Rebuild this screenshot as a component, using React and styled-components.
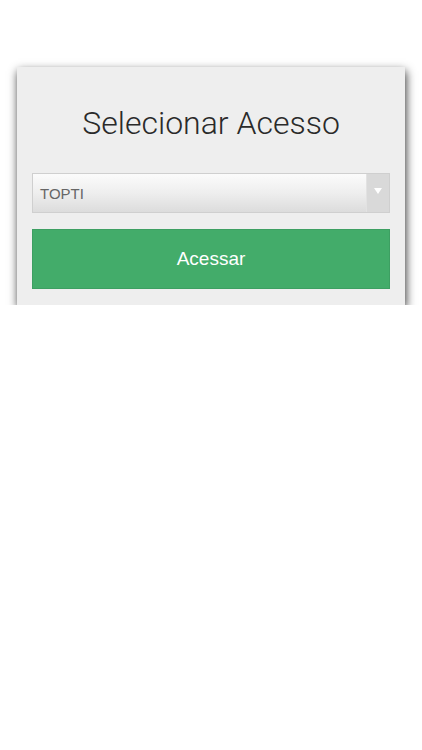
import React, { useState } from 'react';
import styled, { createGlobalStyle } from 'styled-components';

const GlobalStyle = createGlobalStyle`
  body {
    margin: 0;
    background: #ffffff;
    font-family: 'Liberation Sans', Arial, sans-serif;
  }
`;

const Page = styled.div`
  padding: 67px 17px 0 17px;
`;

const Card = styled.div`
  width: 388px;
  box-sizing: border-box;
  background: #eeeeee;
  padding: 36px 15px 16px 15px;
  box-shadow: 1px 4px 9px rgba(0, 0, 0, 0.8);
  display: flex;
  flex-direction: column;
`;

const Title = styled.h1`
  margin: 0 0 30px 0;
  font-family: Roboto, 'Liberation Sans', sans-serif;
  font-weight: 300;
  font-size: 32px;
  line-height: 40px;
  color: #2a2a2a;
  text-align: center;
`;

const SelectBox = styled.div`
  position: relative;
  display: flex;
  align-items: stretch;
  height: 40px;
  box-sizing: border-box;
  border: 1px solid #cfcfcf;
  background: linear-gradient(to bottom, #fbfbfb 0%, #eeeeee 50%, #dcdcdc 100%);
  margin-bottom: 16px;
`;

const SelectLabel = styled.div`
  flex: 1;
  display: flex;
  align-items: center;
  padding-left: 7px;
  font-size: 15px;
  color: #666666;
`;

const ArrowCell = styled.div`
  width: 22px;
  display: flex;
  align-items: center;
  justify-content: center;
  background: #d9d9d9;
  border-left: 1px solid #e2e2e2;
`;

const Arrow = styled.div`
  width: 0;
  height: 0;
  border-left: 4px solid transparent;
  border-right: 4px solid transparent;
  border-top: 6px solid #ffffff;
  margin-bottom: 4px;
`;

const Button = styled.button`
  height: 60px;
  border: 1px solid #3d9f62;
  background: #43ac6a;
  color: #ffffff;
  font-family: 'Liberation Sans', Arial, sans-serif;
  font-size: 19px;
  cursor: pointer;
`;

const App = () => {
  const [acesso] = useState('TOPTI');

  return (
    <Page>
      <GlobalStyle />
      <Card>
        <Title>Selecionar Acesso</Title>
        <SelectBox>
          <SelectLabel>{acesso}</SelectLabel>
          <ArrowCell>
            <Arrow />
          </ArrowCell>
        </SelectBox>
        <Button type="button">Acessar</Button>
      </Card>
    </Page>
  );
};

export default App;
